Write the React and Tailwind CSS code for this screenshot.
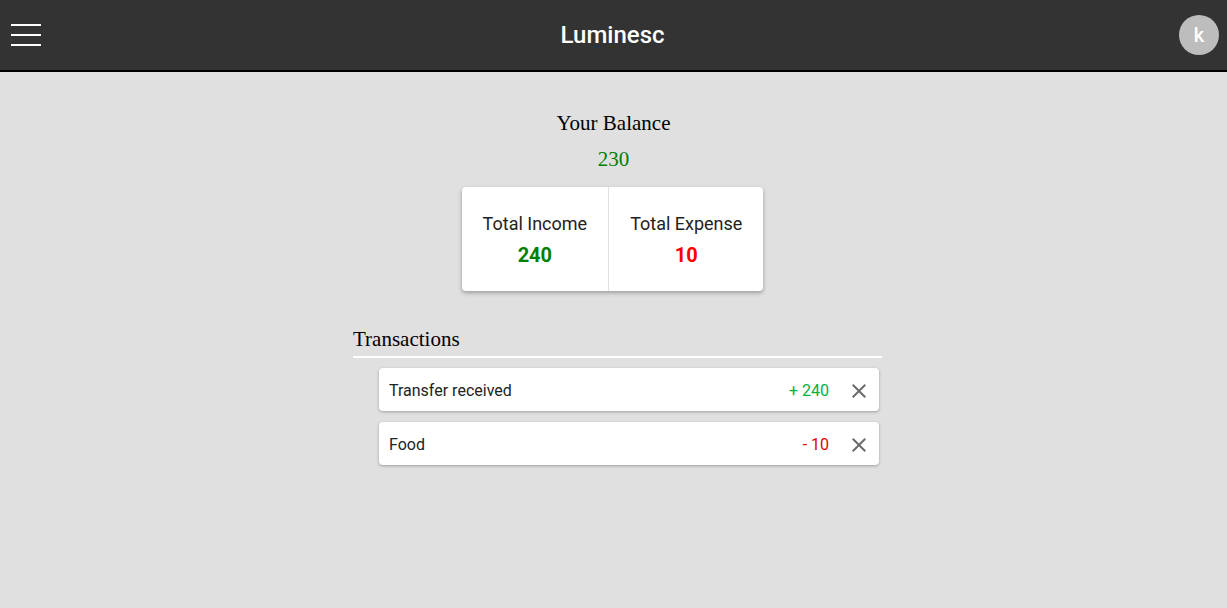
export default function App() {
  const transactions = [
    { id: 1, text: "Transfer received", amount: 240 },
    { id: 2, text: "Food", amount: -10 },
  ];

  return (
    <div className="min-h-screen bg-[#e0e0e0] font-['Roboto',sans-serif]">
      {/* top bar */}
      <header className="h-[72px] bg-[#333333] border-b-2 border-black flex items-center justify-between px-[11px] relative">
        <button className="flex flex-col gap-[8px] w-[30px]">
          <span className="block h-[2px] bg-white"></span>
          <span className="block h-[2px] bg-white"></span>
          <span className="block h-[2px] bg-white"></span>
        </button>
        <h1 className="absolute left-1/2 -translate-x-1/2 text-white text-[24px] font-medium ml-[-1px]">
          Luminesc
        </h1>
        <div className="w-[40px] h-[40px] rounded-full bg-[#bdbdbd] text-white flex items-center justify-center text-[20px] font-medium mr-[-3px]">
          k
        </div>
      </header>

      <main className="flex flex-col items-center pt-[38px]">
        <h2 className="font-['Liberation_Serif',serif] text-[21px] text-black leading-[26px]">
          Your Balance
        </h2>
        <p className="font-['Liberation_Serif',serif] text-[21px] text-[#008000] leading-[26px] mt-[10px]">
          230
        </p>

        <div className="mt-[15px] mr-[2px] bg-white rounded-[4px] shadow-[0_2px_4px_rgba(0,0,0,0.3)] flex h-[104px]">
          <div className="px-[21px] pt-[2px] flex flex-col items-center justify-center border-r border-[#e0e0e0]">
            <span className="text-[18px] text-[#222]">Total Income</span>
            <span className="text-[20px] font-bold text-[#008000] mt-[3px]">240</span>
          </div>
          <div className="px-[21px] pt-[2px] flex flex-col items-center justify-center">
            <span className="text-[18px] text-[#222]">Total Expense</span>
            <span className="text-[20px] font-bold text-[#ff0000] mt-[3px]">10</span>
          </div>
        </div>

        <section className="w-[529px] mt-[35px] ml-[8px]">
          <h3 className="font-['Liberation_Serif',serif] text-[21px] text-black leading-[26px] pb-[4px] border-b-2 border-white">
            Transactions
          </h3>
          <ul className="ml-[26px] mr-[3px] mt-[10px] flex flex-col gap-[11px]">
            {transactions.map((t) => (
              <li
                key={t.id}
                className="h-[43px] bg-white rounded-[4px] shadow-[0_1px_3px_rgba(0,0,0,0.3)] flex items-center pl-[10px] pr-[8px] pt-[2px]"
              >
                <span className="flex-1 text-[16px] text-[#222]">{t.text}</span>
                <span
                  className={
                    t.amount > 0
                      ? "text-[16px] text-[#00b33c] mr-[18px]"
                      : "text-[16px] text-[#e60000] mr-[18px]"
                  }
                >
                  {t.amount > 0 ? `+ ${t.amount}` : `- ${Math.abs(t.amount)}`}
                </span>
                <svg width="24" height="24" viewBox="0 0 24 24" fill="#6b6b6b">
                  <path d="M19 6.41L17.59 5 12 10.59 6.41 5 5 6.41 10.59 12 5 17.59 6.41 19 12 13.41 17.59 19 19 17.59 13.41 12z" />
                </svg>
              </li>
            ))}
          </ul>
        </section>
      </main>
    </div>
  );
}
